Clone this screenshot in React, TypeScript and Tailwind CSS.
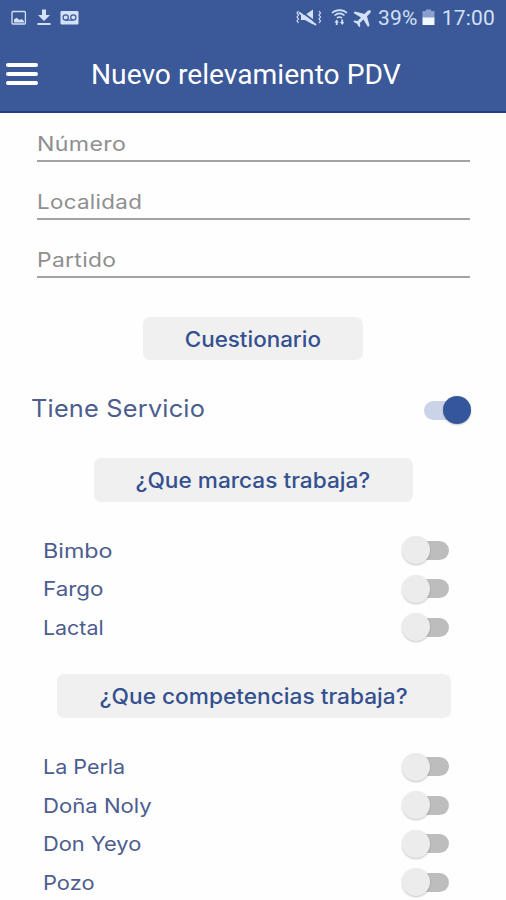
import { useState } from "react";
import { clsx } from "clsx";

const fields = [
  { label: "Número", stretch: "scale-x-[1.157]" },
  { label: "Localidad", stretch: "scale-x-[1.116]" },
  { label: "Partido", stretch: "scale-x-[1.14]" },
];

const marcas = [
  { label: "Bimbo", stretch: "scale-x-[1.165]" },
  { label: "Fargo", stretch: "scale-x-[1.12]" },
  { label: "Lactal", stretch: "scale-x-[1.07]" },
];

const competencias = [
  { label: "La Perla", stretch: "scale-x-[1.075]" },
  { label: "Doña Noly", stretch: "scale-x-[1.105]" },
  { label: "Don Yeyo", stretch: "scale-x-[1.092]" },
  { label: "Pozo", stretch: "scale-x-[1.093]" },
];

function StatusBar() {
  return (
    <div className="flex h-9 items-center justify-between pr-[11px] pl-[11px] text-[#d3e0f7]">
      <svg width="70" height="20" viewBox="0 0 70 20" fill="none">
        {/* picture */}
        <rect x="1" y="3.5" width="13.4" height="12.5" rx="1" stroke="currentColor" strokeWidth="1.3" />
        <path d="M3 14.500V11.500l2.500-1.700 3 2.200 2-1 2.500 2v1.500z" fill="currentColor" />
        {/* download */}
        <path d="M31 1.500h4v5.500h4L33 13 27 7h4zM26.500 15h13v2h-13z" fill="currentColor" />
        {/* voicemail */}
        <rect x="49.500" y="3" width="18" height="13.500" rx="1.200" fill="currentColor" />
        <g stroke="#3b5998" strokeWidth="1.200">
          <circle cx="54.700" cy="9.500" r="2.600" />
          <circle cx="62.300" cy="9.500" r="2.600" />
          <path d="M54.700 12.100h7.600" />
        </g>
      </svg>

      <div className="flex items-center">
        <svg width="79" height="20" viewBox="0 0 79 20" fill="none">
          {/* muted, vibrating */}
          <path d="M6 7h4l8-5.500v15L10 12H6z" fill="currentColor" />
          <path d="M5 2.500l16 12" stroke="#3b5998" strokeWidth="1.600" />
          <path d="M4 4.500l17 12.500" stroke="currentColor" strokeWidth="2" />
          <path
            d="M3.500 3l-1.500 2 1.500 2-1.500 2 1.500 2-1.500 2 1.500 2M24 3l1.500 2-1.500 2 1.500 2-1.500 2 1.500 2-1.500 2"
            stroke="currentColor"
            strokeWidth="1.200"
          />
          {/* wifi with data arrows */}
          <g stroke="currentColor" strokeWidth="1.600">
            <path d="M37 5c4-3.800 11-3.800 15 0M39.500 7.500c3-2.600 7-2.600 10 0M42 10c1.700-1.300 3.300-1.300 5 0" />
          </g>
          <path d="M39.500 14.500l2.200-3 2.200 3h-1.300v2.500h-1.800v-2.500zM45 14h1.300v-2.500h1.800V14h1.300l-2.200 3z" fill="currentColor" />
          {/* airplane */}
          <path
            d="M75.500 2.500c-1-.8-2.300-.2-3.300.8L69.500 6 60 3.500 58.500 5l7.500 4.500-3.500 3.500-3-.5-1.200 1.200 3.700 2.100 2.100 3.500 1.200-1.200-.4-3 3.500-3.500L73 19l1.500-1.500L72 8.300l2.800-2.800c.9-.9 1.500-2.200.7-3z"
            fill="currentColor"
          />
        </svg>
        <span className="ml-[4px] font-['Roboto'] text-[21px] leading-5 tracking-[0.2px]">39%</span>
        <svg className="ml-[4px]" width="14" height="20" viewBox="0 0 14 20">
          <path d="M4 1.500h5V3h3.500v7h-12V3H4z" fill="#8b9fce" />
          <path d="M.5 9.500h12V17H.5z" fill="#f0f7ff" />
        </svg>
        <span className="ml-[6px] font-['Roboto'] text-[21px] leading-5 tracking-[0.2px]">17:00</span>
      </div>
    </div>
  );
}

function Toggle({ on, onChange, label }: { on: boolean; onChange: () => void; label: string }) {
  return (
    <button
      role="switch"
      aria-checked={on}
      aria-label={label}
      onClick={onChange}
      className="flex h-7 w-[47px] shrink-0 items-center"
    >
      <span
        className={clsx(
          "flex h-[19px] w-full items-center rounded-full",
          on ? "justify-end bg-[#cbd3e8]" : "justify-start bg-linear-to-r from-transparent from-30% to-[#bdbdbd] to-30%"
        )}
      >
        <span
          className={clsx(
            "size-7 rounded-full shadow-[0_1px_2px_rgba(0,0,0,0.22)]",
            on ? "bg-[#34569a]" : "bg-[#ececec]"
          )}
        />
      </span>
    </button>
  );
}

function SectionButton({ label, className, stretch }: { label: string; className: string; stretch: string }) {
  return (
    <button
      className={clsx(
        "shrink-0 self-center rounded-[7px] bg-[#f0f0f0] pt-[2px] text-[21px] font-medium whitespace-nowrap text-[#34508f]",
        className
      )}
    >
      <span className={clsx("inline-block", stretch)}>{label}</span>
    </button>
  );
}

function ToggleList({
  items,
  values,
  onToggle,
  className,
}: {
  items: { label: string; stretch: string }[];
  values: Record<string, boolean>;
  onToggle: (label: string) => void;
  className: string;
}) {
  return (
    <ul className={clsx("flex flex-col pr-[57px] pl-[42.5px]", className)}>
      {items.map(({ label, stretch }) => (
        <li key={label} className="flex h-[38.5px] items-center justify-between">
          <span className={clsx("mt-px inline-block origin-left text-[20px] text-[#4c5d8e]", stretch)}>{label}</span>
          <Toggle on={!!values[label]} onChange={() => onToggle(label)} label={label} />
        </li>
      ))}
    </ul>
  );
}

export default function App() {
  const [values, setValues] = useState<Record<string, boolean>>({ "Tiene Servicio": true });

  const toggle = (label: string) => setValues((v) => ({ ...v, [label]: !v[label] }));

  return (
    <div className="flex h-[900px] w-[506px] flex-col overflow-hidden bg-[#fefefe] font-['Inter',sans-serif]">
      <header className="h-[113px] shrink-0 border-b-2 border-[#203f7c] bg-[#3b5998]">
        <StatusBar />
        <div className="flex h-[75px] items-center">
          <button aria-label="Menú" className="ml-[6px] flex w-8 flex-col gap-[5px]">
            <span className="h-1 rounded-full bg-white" />
            <span className="h-1 rounded-full bg-white" />
            <span className="h-1 rounded-full bg-white" />
          </button>
          <h1 className="mt-[2px] ml-[53px] font-['Roboto'] text-[28.2px] leading-8 whitespace-nowrap text-white">
            Nuevo relevamiento PDV
          </h1>
        </div>
      </header>

      <main className="flex flex-col">
        <div className="flex flex-col pr-9 pl-[37px]">
          {fields.map(({ label, stretch }, i) => (
            <div
              key={label}
              className={clsx("flex items-end border-b-2 border-[#a3a3a3] pb-px", i === 0 ? "h-[49px]" : "h-[58px]")}
            >
              <input
                placeholder={label}
                className={clsx(
                  "w-[360px] origin-left bg-transparent text-[20px] tracking-[0.3px] outline-none placeholder:text-[#8f8f8f]",
                  stretch
                )}
              />
            </div>
          ))}
        </div>

        <SectionButton label="Cuestionario" stretch="scale-x-[1.067]" className="mt-[39px] h-[43px] w-[220px]" />

        <div className="mt-[28px] flex h-[42px] items-center justify-between pr-[35px] pl-[31px]">
          <span className="inline-block origin-left scale-x-[1.055] text-[24px] tracking-[0.2px] text-[#4c5d8e]">
            Tiene Servicio
          </span>
          <div className="mt-[2px]">
            <Toggle on={!!values["Tiene Servicio"]} onChange={() => toggle("Tiene Servicio")} label="Tiene Servicio" />
          </div>
        </div>

        <SectionButton
          label="¿Que marcas trabaja?"
          stretch="scale-x-[1.078]"
          className="mt-[28px] h-[44px] w-[319px]"
        />
        <ToggleList items={marcas} values={values} onToggle={toggle} className="mt-[29px]" />

        <SectionButton
          label="¿Que competencias trabaja?"
          stretch="scale-x-[1.08]"
          className="mt-[27px] ml-px h-[44px] w-[394px]"
        />
        <ToggleList items={competencias} values={values} onToggle={toggle} className="mt-[30px]" />
      </main>
    </div>
  );
}
